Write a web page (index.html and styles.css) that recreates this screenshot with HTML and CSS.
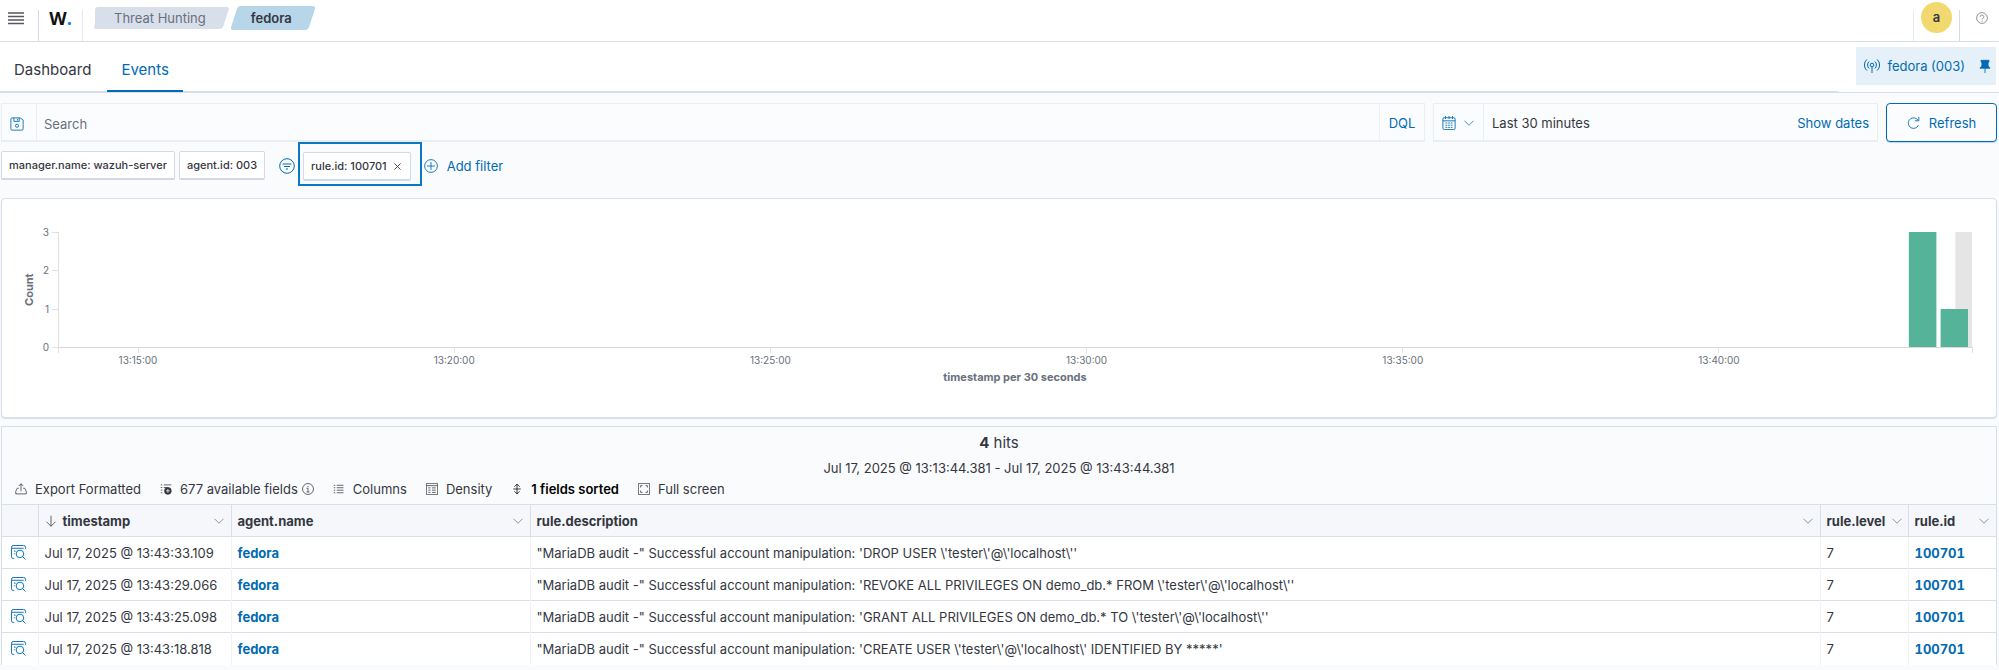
FILE: index.html
```html
<!DOCTYPE html>
<html lang="en">
<head>
  <meta charset="UTF-8">
  <meta name="viewport" content="width=device-width, initial-scale=1">
  <title>Threat Hunting - fedora</title>
  <link rel="stylesheet" href="styles.css">
</head>
<body>

<!-- Shared icons -->
<svg class="sprite" aria-hidden="true">
  <symbol id="chevron" viewBox="0 0 16 16"><path d="M2 5l6 6 6-6"/></symbol>
  <symbol id="inspect" viewBox="0 0 16 16">
    <path d="M3.500 14.500H2.500a2 2 0 0 1-2-2v-10a2 2 0 0 1 2-2h11a2 2 0 0 1 2 2V4M.5 3.500h13M3 6.500h2M3 9.500h1"/>
    <circle cx="9.500" cy="9.500" r="4"/>
    <path d="M12.300 12.300l3.200 3.200"/>
  </symbol>
</svg>

<header class="header">
  <button class="header-button menu" type="button" aria-label="Menu">
    <svg class="icon" viewBox="0 0 16 16"><path class="thick" d="M0 3h16M0 6.500h16M0 10h16M0 13.500h16"/></svg>
  </button>
  <a class="logo" href="#">W<span class="logo-dot">.</span></a>
  <nav class="breadcrumbs" aria-label="Breadcrumbs">
    <a class="crumb crumb-first" href="#">Threat Hunting</a>
    <a class="crumb crumb-last" href="#" aria-current="page">fedora</a>
  </nav>
  <button class="header-button user" type="button" aria-label="Account"><span class="avatar">a</span></button>
  <button class="header-button help" type="button" aria-label="Help">
    <svg class="icon icon-small" viewBox="0 0 16 16"><circle cx="8" cy="8" r="7.200"/><path d="M5.500 6.500a2.500 2.300 0 1 1 3.500 2q-1 .5-1 1.500M8 11.500v1.500"/></svg>
  </button>
</header>

<div class="tabs-bar">
  <div class="tabs" role="tablist">
    <button class="tab" role="tab" type="button">Dashboard</button>
    <button class="tab tab-active" role="tab" type="button" aria-selected="true">Events</button>
  </div>
  <div class="agent">
    <button class="agent-name" type="button">
      <svg class="icon icon-large" viewBox="0 0 16 16"><circle cx="8" cy="7" r="1.800"/><path d="M8 9v6M5.200 10.500a4.500 4.500 0 0 1 0-7M10.800 10.500a4.500 4.500 0 0 0 0-7M2.800 12.500a7.500 7.500 0 0 1 0-11M13.200 12.500a7.500 7.500 0 0 0 0-11"/></svg>
      fedora (003)
    </button>
    <button class="agent-pin" type="button" aria-label="Unpin agent">
      <svg class="icon" viewBox="0 0 16 16"><path class="solid" d="M3.500 1.500h9v2h-1v4.500l2 2v.5h-11V10l2-2V3.500h-1z"/><path d="M8 10v6"/></svg>
    </button>
  </div>
</div>

<div class="query-bar">
  <div class="search">
    <button class="search-saved" type="button" aria-label="Saved queries">
      <svg class="icon" viewBox="0 0 16 16"><path d="M2.500 1h9L15 3.500v10a1.500 1.500 0 0 1-1.500 1.500h-11A1.500 1.500 0 0 1 1 13.500v-11A1.500 1.500 0 0 1 2.500 1zM4.500 1v4h6V1M8.500 2v2"/><circle cx="8" cy="10" r="1.800"/></svg>
    </button>
    <input class="search-input" type="text" placeholder="Search" aria-label="Search">
    <button class="search-lang" type="button">DQL</button>
  </div>
  <div class="dates">
    <button class="dates-quick" type="button" aria-label="Date quick select">
      <svg class="icon" viewBox="0 0 16 16"><rect x="1" y="2" width="14" height="13.500" rx="1.500"/><path d="M1 5.500h14M4 0v3.500M8 0v3.500M12 0v3.500M4 8h2M7 8h2M10 8h2M4 10.500h2M7 10.500h2M10 10.500h2M4 13h2M7 13h2M10 13h2"/></svg>
      <svg class="icon icon-small"><use href="#chevron"/></svg>
    </button>
    <button class="dates-range" type="button">
      <span>Last 30 minutes</span>
      <span class="dates-show">Show dates</span>
    </button>
  </div>
  <button class="refresh" type="button">
    <svg class="icon" viewBox="0 0 16 16"><path d="M13 10.500a6 6 0 1 1-2-7.200l2 1.700M13.500 1v4.500H9"/></svg>
    Refresh
  </button>
</div>

<div class="filters">
  <div class="filter-group">
    <span class="pill">manager.name: wazuh-server</span>
    <span class="pill">agent.id: 003</span>
    <button class="filter-options" type="button" aria-label="Filter options">
      <svg class="icon icon-large" viewBox="0 0 16 16"><circle cx="8" cy="8" r="7.300"/><path d="M3.500 6h9M5 8.500h6M7 11h2"/></svg>
    </button>
  </div>
  <div class="filter-marked">
    <span class="pill">rule.id: 100701
      <button class="pill-remove" type="button" aria-label="Remove filter">
        <svg class="icon" viewBox="0 0 8 8"><path d="M.5.5l7 7M7.500.5l-7 7"/></svg>
      </button>
    </span>
  </div>
  <div class="filter-group">
    <button class="filter-add" type="button">
      <svg class="icon" viewBox="0 0 16 16"><circle cx="8" cy="8" r="7.300"/><path d="M8 3.500v9M3.500 8h9"/></svg>
      Add filter
    </button>
  </div>
</div>

<section class="chart">
  <div class="chart-title-y">Count</div>
  <svg class="plot" role="img" aria-label="Events per 30 seconds">
    <rect class="partial" x="99.13%" y="0" width="0.87%" height="115"/>
    <rect class="bar" x="96.7%" y="0" width="1.44%" height="115"/>
    <rect class="bar" x="98.36%" y="77" width="1.43%" height="38"/>
    <g class="axis axis-y">
      <line x1="0" y1="0" x2="0" y2="115"/>
      <line x1="-6" y1="0" x2="0" y2="0"/>
      <line x1="-6" y1="38" x2="0" y2="38"/>
      <line x1="-6" y1="77" x2="0" y2="77"/>
      <line x1="-6" y1="115" x2="0" y2="115"/>
      <text x="-9" y="4">3</text>
      <text x="-9" y="42">2</text>
      <text x="-9" y="81">1</text>
      <text x="-9" y="119">0</text>
    </g>
    <g class="axis axis-x">
      <line class="base" x1="0" y1="115" x2="100%" y2="115"/>
      <line x1="0" y1="115" x2="0" y2="121"/>
      <line x1="4.18%" y1="115" x2="4.18%" y2="121"/>
      <line x1="20.7%" y1="115" x2="20.7%" y2="121"/>
      <line x1="37.22%" y1="115" x2="37.22%" y2="121"/>
      <line x1="53.74%" y1="115" x2="53.74%" y2="121"/>
      <line x1="70.26%" y1="115" x2="70.26%" y2="121"/>
      <line x1="86.78%" y1="115" x2="86.78%" y2="121"/>
      <line x1="100%" y1="115" x2="100%" y2="121"/>
      <text x="4.18%" y="132">13:15:00</text>
      <text x="20.7%" y="132">13:20:00</text>
      <text x="37.22%" y="132">13:25:00</text>
      <text x="53.74%" y="132">13:30:00</text>
      <text x="70.26%" y="132">13:35:00</text>
      <text x="86.78%" y="132">13:40:00</text>
      <text class="axis-title" x="50%" y="149">timestamp per 30 seconds</text>
    </g>
  </svg>
</section>

<section class="results">
  <div class="hits"><strong>4</strong> hits</div>
  <div class="range">Jul 17, 2025 @ 13:13:44.381 - Jul 17, 2025 @ 13:43:44.381</div>

  <div class="toolbar">
    <button class="tool" type="button">
      <svg class="icon icon-small" viewBox="0 0 16 16"><path d="M5 7H3l-2 4v3.500h14V11l-2-4h-2M8 11V1M5 4l3-3 3 3"/></svg>
      Export Formatted
    </button>
    <button class="tool" type="button">
      <svg class="icon icon-small" viewBox="0 0 16 16"><path d="M1 2.500h2M5 2.500h10M1 6h2M5 6h5M1 9.500h2M1 13h2"/><circle class="solid" cx="10.500" cy="10.500" r="4.500"/><path class="hole" d="M10.500 8v5M8 10.500h5"/></svg>
      677 available fields
      <svg class="icon icon-small icon-info" viewBox="0 0 16 16"><circle cx="8" cy="8" r="7.300"/><path d="M6 7h2v5M6 12h4M8 4v1.500"/></svg>
    </button>
    <button class="tool" type="button">
      <svg class="icon icon-small" viewBox="0 0 16 16"><path d="M1 3h2M5 3h9M1 6.300h2M5 6.300h9M1 9.600h2M5 9.600h9M1 13h2M5 13h9"/></svg>
      Columns
    </button>
    <button class="tool" type="button">
      <svg class="icon icon-small" viewBox="0 0 16 16"><path d="M.5.500h15v15H.500zM.5 3.500h15M3 6.500h3M8 6.500h5M3 9.500h3M8 9.500h5M3 12.500h3M8 12.500h5"/></svg>
      Density
    </button>
    <button class="tool tool-active" type="button">
      <svg class="icon icon-small" viewBox="0 0 16 16"><path d="M8 1.500v13M4.500 5L8 1.500 11.500 5M4.500 11L8 14.500l3.500-3.500M3 8h10"/></svg>
      1 fields sorted
    </button>
    <button class="tool" type="button">
      <svg class="icon icon-small" viewBox="0 0 16 16"><path d="M.5.500h15v15H.500zM3.500 6V3.500H6M10 3.500h2.500V6M12.500 10v2.500H10M6 12.500H3.500V10"/></svg>
      Full screen
    </button>
  </div>

  <table class="grid">
    <colgroup>
      <col class="col-action">
      <col class="col-time">
      <col class="col-agent">
      <col class="col-description">
      <col class="col-level">
      <col class="col-id">
    </colgroup>
    <thead>
      <tr>
        <th aria-label="Inspect"></th>
        <th>
          <div class="head">
            <svg class="icon icon-small" viewBox="0 0 16 16"><path d="M8 1v14M2 9l6 6 6-6"/></svg>
            <span class="head-label">timestamp</span>
            <svg class="icon icon-caret"><use href="#chevron"/></svg>
          </div>
        </th>
        <th><div class="head"><span class="head-label">agent.name</span><svg class="icon icon-caret"><use href="#chevron"/></svg></div></th>
        <th><div class="head"><span class="head-label">rule.description</span><svg class="icon icon-caret"><use href="#chevron"/></svg></div></th>
        <th><div class="head"><span class="head-label">rule.level</span><svg class="icon icon-caret"><use href="#chevron"/></svg></div></th>
        <th><div class="head"><span class="head-label">rule.id</span><svg class="icon icon-caret"><use href="#chevron"/></svg></div></th>
      </tr>
    </thead>
    <tbody>
      <tr>
        <td><button class="inspect" type="button" aria-label="Inspect"><svg class="icon"><use href="#inspect"/></svg></button></td>
        <td>Jul 17, 2025 @ 13:43:33.109</td>
        <td><a href="#">fedora</a></td>
        <td>"MariaDB audit -" Successful account manipulation: 'DROP USER \'tester\'@\'localhost\''</td>
        <td>7</td>
        <td><a class="rule-id" href="#">100701</a></td>
      </tr>
      <tr>
        <td><button class="inspect" type="button" aria-label="Inspect"><svg class="icon"><use href="#inspect"/></svg></button></td>
        <td>Jul 17, 2025 @ 13:43:29.066</td>
        <td><a href="#">fedora</a></td>
        <td>"MariaDB audit -" Successful account manipulation: 'REVOKE ALL PRIVILEGES ON demo_db.* FROM \'tester\'@\'localhost\''</td>
        <td>7</td>
        <td><a class="rule-id" href="#">100701</a></td>
      </tr>
      <tr>
        <td><button class="inspect" type="button" aria-label="Inspect"><svg class="icon"><use href="#inspect"/></svg></button></td>
        <td>Jul 17, 2025 @ 13:43:25.098</td>
        <td><a href="#">fedora</a></td>
        <td>"MariaDB audit -" Successful account manipulation: 'GRANT ALL PRIVILEGES ON demo_db.* TO \'tester\'@\'localhost\''</td>
        <td>7</td>
        <td><a class="rule-id" href="#">100701</a></td>
      </tr>
      <tr>
        <td><button class="inspect" type="button" aria-label="Inspect"><svg class="icon"><use href="#inspect"/></svg></button></td>
        <td>Jul 17, 2025 @ 13:43:18.818</td>
        <td><a href="#">fedora</a></td>
        <td>"MariaDB audit -" Successful account manipulation: 'CREATE USER \'tester\'@\'localhost\' IDENTIFIED BY *****'</td>
        <td>7</td>
        <td><a class="rule-id" href="#">100701</a></td>
      </tr>
    </tbody>
  </table>
</section>

</body>
</html>
```
FILE: styles.css
```css
* {
  box-sizing: border-box;
}

body {
  margin: 0;
  background: #fafbfd;
  color: #343741;
  font-family: Inter, "Liberation Sans", sans-serif;
  font-size: 13px;
  line-height: 20px;
}

button,
input {
  margin: 0;
  padding: 0;
  border: 0;
  background: none;
  color: inherit;
  font: inherit;
}

button {
  display: flex;
  align-items: center;
  white-space: nowrap;
  cursor: pointer;
}

a {
  color: #006bb4;
  text-decoration: none;
}

.sprite {
  display: none;
}

.icon {
  flex: none;
  width: 14px;
  height: 14px;
  fill: none;
  stroke: currentColor;
  stroke-width: 1;
}

.icon-small {
  width: 12px;
  height: 12px;
}

.icon-large {
  width: 16px;
  height: 16px;
}

.icon .thick {
  stroke: #54585f;
  stroke-width: 1.5;
}

.icon .solid {
  fill: currentColor;
}

.icon .hole {
  stroke: #fff;
}

/* Header */
.header {
  display: flex;
  align-items: flex-end;
  height: 42px;
  border-bottom: 1px solid #d9dfea;
  background: #fff;
}

.header-button,
.logo {
  display: flex;
  justify-content: center;
  height: 31px;
  color: #343741;
}

.header-button {
  align-items: flex-start;
}

.menu {
  justify-content: flex-start;
  width: 39px;
  padding-left: 8px;
  border-right: 1px solid #d3dae6;
}

.menu .icon {
  width: 16px;
  height: 16px;
}

.logo {
  width: 44px;
  border-right: 1px solid #e3e8f0;
  color: #111;
  font-family: "Open Sans", sans-serif;
  font-size: 18px;
  font-weight: 700;
  line-height: 16px;
}

.logo-dot {
  color: #0a7cff;
}

.breadcrumbs {
  display: flex;
  align-self: flex-start;
  flex: 1;
  gap: 4px;
  padding: 7px 12px;
}

.crumb {
  position: relative;
  z-index: 0;
  padding: 0 22px 0 19px;
  color: #69707d;
  line-height: 22px;
}

.crumb::before,
.crumb::after {
  content: "";
  position: absolute;
  z-index: -1;
  top: 0;
  bottom: 0;
  right: 2px;
  left: 2px;
  border-radius: 3px;
  background: #d9dfea;
  transform: skewX(-18deg);
}

.crumb-first::after {
  right: 20px;
  left: 0;
  transform: none;
}

.crumb-last {
  color: #343741;
  font-weight: 600;
}

.crumb-last::before {
  top: -1px;
  bottom: -1px;
  background: #b7d6e9;
}

.crumb-last::after {
  display: none;
}

.user {
  align-items: flex-end;
  width: 47px;
  border-right: 1px solid #d3dae6;
  border-left: 1px solid #e3e8f0;
}

.avatar {
  width: 31px;
  height: 31px;
  margin-bottom: 8px;
  border-radius: 50%;
  background: #f1d86f;
  font-weight: 600;
  line-height: 31px;
}

.help {
  width: 39px;
  padding: 2px 0 0 4px;
  color: #69707d;
}

/* Tabs and pinned agent */
.tabs-bar {
  display: flex;
  justify-content: space-between;
  height: 51px;
  border-bottom: 1px solid #d9dfea;
  background: #fff;
}

.tabs {
  display: flex;
  flex: 1;
  gap: 2px;
  margin-right: 18px;
  box-shadow: inset 0 -1px #d9dfea;
}

.tab {
  padding: 8px 14px 0;
  border-bottom: 2px solid transparent;
  font-size: 15px;
}

.tab-active {
  border-bottom-color: #006bb4;
  color: #006bb4;
}

.agent {
  display: flex;
  gap: 13px;
  align-items: center;
  height: 38px;
  margin: 5px 3px 0 0;
  padding: 0 4px 0 8px;
  background: #e6f0f8;
  color: #006bb4;
}

.agent-name {
  gap: 7px;
}

/* Query bar */
.query-bar {
  display: flex;
  gap: 8px;
  padding: 10px 2px 0 1px;
}

.search,
.dates {
  display: flex;
  height: 39px;
  border: 1px solid #e9edf4;
  background: #fbfcfd;
  box-shadow: inset 0 -1px #e9edf4;
}

.search {
  flex: 1;
}

.search-saved {
  width: 35px;
  padding: 2px 0 0 8px;
  border-right: 1px solid #e9edf4;
  color: #006bb4;
}

.search-input {
  flex: 1;
  padding: 3px 7px 0;
}

.search-input::placeholder {
  color: #69707d;
  opacity: 1;
}

.search-lang {
  justify-content: center;
  width: 45px;
  border-left: 1px solid #eef1f7;
  color: #006bb4;
}

.dates {
  width: 445px;
}

.dates-quick {
  gap: 7px;
  padding: 0 8px;
  border-right: 1px solid #e9edf4;
  color: #006bb4;
}

.dates-range {
  flex: 1;
  justify-content: space-between;
  padding: 0 8px;
}

.dates-show {
  color: #006bb4;
}

.refresh {
  gap: 8px;
  justify-content: center;
  width: 111px;
  height: 39px;
  border: 1px solid #006bb4;
  border-radius: 4px;
  background: #fbfcfd;
  color: #006bb4;
  box-shadow: 0 1px 1px #b7d6e9;
}

/* Filters */
.filters {
  display: flex;
  align-items: center;
  padding-left: 1px;
}

.filter-group {
  display: flex;
  align-items: center;
  padding-top: 3px;
}

.pill {
  display: flex;
  gap: 5px;
  align-items: center;
  height: 29px;
  margin-right: 4px;
  padding: 0 7px;
  border: 1px solid #d3dae6;
  border-bottom-width: 2px;
  border-radius: 2px;
  background: #fff;
  font-size: 11px;
  font-weight: 500;
  white-space: nowrap;
}

.pill-remove {
  padding: 0 2px;
}

.pill-remove .icon {
  width: 7px;
  height: 7px;
}

.filter-options {
  padding: 0 3px 0 10px;
  color: #006bb4;
}

.filter-marked {
  padding: 8px 5px 3px 3px;
  border: 2px solid #0b78c4;
}

.filter-add {
  gap: 9px;
  padding-left: 2px;
  color: #006bb4;
}

/* Histogram */
.chart {
  display: flex;
  align-items: flex-start;
  height: 220px;
  margin: 12px 2px 8px 1px;
  padding: 33px 24px 0 19px;
  border: 1px solid #d9dfea;
  border-radius: 4px;
  background: #fff;
  box-shadow: 0 1px 1px #d9dfea;
}

.chart-title-y {
  width: 37px;
  height: 115px;
  padding-left: 21px;
  color: #69707d;
  font-size: 11px;
  font-weight: 700;
  line-height: 16px;
  text-align: center;
  writing-mode: vertical-rl;
  transform: rotate(180deg);
}

.plot {
  flex: 1;
  min-width: 0;
  height: 160px;
  overflow: visible;
}

.bar {
  fill: #54b399;
}

.partial {
  fill: #e5e5e5;
}

.axis line {
  stroke: #e0e0e0;
  shape-rendering: crispEdges;
}

.axis .base {
  stroke: #d8d8d8;
}

.axis text {
  fill: #69707d;
  font-size: 10px;
  text-anchor: middle;
}

.axis-y text {
  text-anchor: end;
}

.axis .axis-title {
  font-size: 11px;
  font-weight: 700;
}

/* Results */
.results {
  margin: 0 2px 0 1px;
  border: 1px solid #d9dfea;
  border-bottom: 0;
}

.hits,
.range {
  text-align: center;
}

.hits {
  padding: 6px 0 3px;
  font-size: 15px;
}

.range {
  padding: 2px 0 1px;
}

.toolbar {
  display: flex;
  gap: 19px;
  height: 25px;
  padding: 0 0 5px 13px;
}

.tool {
  gap: 8px;
}

.tool-active {
  color: #000;
  font-weight: 600;
}

.icon-info {
  margin-left: -4px;
}

.grid {
  width: 100%;
  border-collapse: collapse;
  table-layout: fixed;
  background: #fff;
}

.grid th,
.grid td {
  height: 32px;
  padding: 0 6px;
  border-top: 1px solid #d9dfea;
  border-left: 1px solid #f0f2f7;
  text-align: left;
  white-space: nowrap;
}

.grid th {
  border-left-color: #d9dfea;
  background: #f5f7fa;
}

.grid th:first-child,
.grid td:first-child {
  border-left: 0;
}

.grid a {
  font-weight: 700;
}

.rule-id {
  font-variant-numeric: tabular-nums;
}

.col-action {
  width: 36px;
}

.col-time {
  width: 193px;
}

.col-agent {
  width: 299px;
}

.col-level,
.col-id {
  width: 88px;
}

.head {
  display: flex;
  gap: 6px;
  align-items: center;
  font-weight: 700;
}

.head-label {
  flex: 1;
}

.icon-caret {
  width: 12px;
  height: 12px;
  color: #69707d;
}

.inspect {
  margin-left: 3px;
  color: #006bb4;
}

.inspect .icon {
  width: 15px;
  height: 15px;
}
```
